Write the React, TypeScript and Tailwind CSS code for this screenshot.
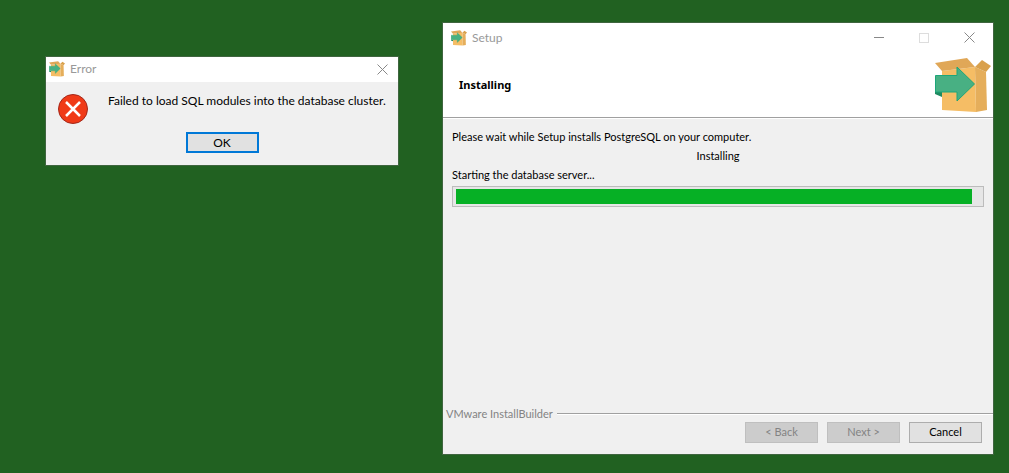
import React from 'react';

const BoxIcon: React.FC<{ className?: string }> = ({ className }) => (
  <svg viewBox="0 0 56 55" className={className} aria-hidden="true">
    {/* Box */}
    <path d="M7 13 40 9 41 54 7 52Z" fill="#f5bd65" />
    <path d="M40 9 51 14 52 52 41 54Z" fill="#e5ae5b" />
    {/* Flaps */}
    <path d="M0 5 32 0 40 9 7 13Z" fill="#e0a757" />
    <path d="M40 9 47 2 56 8 51 14Z" fill="#d9a14d" />
    {/* Arrow */}
    <path d="M0 34H7V39L0 36Z" fill="#1f8a60" />
    <path d="M0.500 17.500H22V9L39.500 26 22 43V34H0.500Z" fill="#48b083" stroke="#1da67a" />
  </svg>
);

const ErrorIcon: React.FC = () => (
  <svg viewBox="0 0 30 30" className="w-[30px] h-[30px] shrink-0" aria-hidden="true">
    <circle cx="15" cy="15" r="14.500" fill="#f03a17" stroke="#a3281a" />
    <path d="M8 8 22 22M22 8 8 22" stroke="#fff" strokeWidth="2.500" />
  </svg>
);

const CloseIcon: React.FC = () => (
  <svg viewBox="0 0 11 11" className="w-[11px] h-[11px]" aria-hidden="true">
    <path d="M0.500 0.500 10.500 10.500M10.500 0.500 0.500 10.500" stroke="#888" fill="none" />
  </svg>
);

const ErrorDialog: React.FC = () => (
  <section
    role="dialog"
    aria-label="Error"
    className="absolute left-[46px] top-[57px] w-[352px] bg-[#f0f0f0] shadow-[0_0_0_1px_#3f653f] font-['Lato','Noto_Sans',sans-serif] text-xs"
  >
    <header className="h-[25px] bg-white flex items-center pl-[3px] pr-[10px] pb-px">
      <BoxIcon className="w-4 h-4" />
      <h2 className="flex-1 ml-[5px] text-[#999]">Error</h2>
      <button type="button" aria-label="Close">
        <CloseIcon />
      </button>
    </header>
    <div className="flex gap-5 px-3 pt-3">
      <ErrorIcon />
      <p className="whitespace-nowrap leading-[14px]">Failed to load SQL modules into the database cluster.</p>
    </div>
    <div className="flex justify-center pt-2 pb-3">
      <button type="button" className="w-[73px] h-[21px] bg-[#e1e1e1] border-2 border-[#0078d7] flex items-center justify-center">
        OK
      </button>
    </div>
  </section>
);

const navButtons = [
  { label: '< Back', disabled: true },
  { label: 'Next >', disabled: true },
  { label: 'Cancel', disabled: false },
];

const SetupWindow: React.FC = () => (
  <section
    aria-label="Setup"
    className="absolute left-[443px] top-[23px] w-[550px] h-[431px] flex flex-col bg-[#f0f0f0] shadow-[0_0_0_1px_#3f653f] font-['Lato','Noto_Sans',sans-serif] text-[11px]"
  >
    <header className="h-[29px] bg-white flex items-center pl-2 pr-[18px]">
      <BoxIcon className="w-4 h-4" />
      <h1 className="flex-1 ml-[5px] text-xs text-[#999]">Setup</h1>
      <div className="flex items-center gap-[35px]">
        <button type="button" aria-label="Minimize">
          <span className="block w-[10px] h-px bg-[#888]" />
        </button>
        <button type="button" aria-label="Maximize" disabled>
          <span className="block w-[10px] h-[10px] border border-[#ddd]" />
        </button>
        <button type="button" aria-label="Close">
          <CloseIcon />
        </button>
      </div>
    </header>

    <div className="h-[66px] pl-4 pr-[2px] pt-[2px] bg-white border-b border-[#a0a0a0] flex items-center justify-between">
      <h2 className="font-['Noto_Sans',sans-serif] font-bold">Installing</h2>
      <BoxIcon className="w-14 h-[55px]" />
    </div>

    <main className="flex-1 pt-2 px-[9px] border-t border-white">
      <div className="leading-[19px]">
        <p>Please wait while Setup installs PostgreSQL on your computer.</p>
        <p className="text-center">Installing</p>
        <p id="status">Starting the database server...</p>
      </div>
      <div
        role="progressbar"
        aria-labelledby="status"
        aria-valuenow={98}
        className="h-[21px] mt-[2px] bg-[#e6e6e6] border border-[#bcbcbc] px-[3px] py-[2px]"
      >
        <div className="h-full bg-[#06b025]" style={{ width: '98.500%' }} />
      </div>
    </main>

    <footer>
      <div className="flex items-center gap-1 pl-[3px] h-4 text-[#838383]">
        <span>VMware InstallBuilder</span>
        <span className="flex-1 h-[2px] bg-[#a0a0a0] border-b border-white" />
      </div>
      <div className="flex justify-end gap-[9px] pr-[11px] pb-[11px]">
        {navButtons.map((b) => (
          <button
            key={b.label}
            type="button"
            disabled={b.disabled}
            className="w-[73px] h-[21px] bg-[#e1e1e1] border border-[#adadad] disabled:bg-[#cccccc] disabled:border-[#bfbfbf] disabled:text-[#838383]"
          >
            {b.label}
          </button>
        ))}
      </div>
    </footer>
  </section>
);

const App: React.FC = () => (
  <div className="relative min-h-screen bg-[#216121] text-black overflow-hidden">
    <ErrorDialog />
    <SetupWindow />
  </div>
);

export default App;
